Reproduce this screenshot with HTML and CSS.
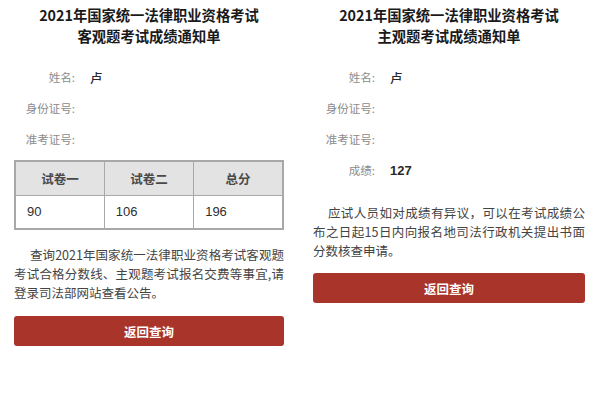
FILE: index.html
```html
<!DOCTYPE html>
<html lang="zh-CN">
<head>
<meta charset="utf-8">
<link rel="stylesheet" href="styles.css">
</head>
<body>
<div class="page">
  <section class="panel panel-left">
    <h1 class="title">2021年国家统一法律职业资格考试<br>客观题考试成绩通知单</h1>
    <div class="fields">
      <div class="row"><span class="label">姓名:</span><span class="value">卢</span></div>
      <div class="row"><span class="label">身份证号:</span><span class="value"></span></div>
      <div class="row"><span class="label">准考证号:</span><span class="value"></span></div>
    </div>
    <table class="scores">
      <thead>
        <tr><th>试卷一</th><th>试卷二</th><th>总分</th></tr>
      </thead>
      <tbody>
        <tr><td>90</td><td>106</td><td>196</td></tr>
      </tbody>
    </table>
    <p class="note">
      <span class="line first">查询2021年国家统一法律职业资格考试客观题</span>
      <span class="line">考试合格分数线、主观题考试报名交费等事宜,请</span>
      <span class="line last">登录司法部网站查看公告。</span>
    </p>
    <button class="btn">返回查询</button>
  </section>
  <section class="panel panel-right">
    <h1 class="title">2021年国家统一法律职业资格考试<br>主观题考试成绩通知单</h1>
    <div class="fields">
      <div class="row"><span class="label">姓名:</span><span class="value">卢</span></div>
      <div class="row"><span class="label">身份证号:</span><span class="value"></span></div>
      <div class="row"><span class="label">准考证号:</span><span class="value"></span></div>
      <div class="row"><span class="label">成绩:</span><span class="value score">127</span></div>
    </div>
    <p class="note note-right">
      <span class="line first">应试人员如对成绩有异议，可以在考试成绩公</span>
      <span class="line">布之日起15日内向报名地司法行政机关提出书面</span>
      <span class="line last">分数核查申请。</span>
    </p>
    <button class="btn">返回查询</button>
  </section>
</div>
</body>
</html>
```

FILE: styles.css
```css
* { box-sizing: border-box; }
html, body {
  margin: 0;
  padding: 0;
  background: #ffffff;
}
body {
  width: 600px;
  height: 400px;
  overflow: hidden;
  font-family: "Noto Sans CJK SC", "Noto Sans", sans-serif;
  color: #333;
}
.page {
  display: flex;
  width: 600px;
}
.panel {
  width: 300px;
  display: flex;
  flex-direction: column;
  padding-top: 4px;
}
.panel-left { padding-left: 14px; padding-right: 16px; }
.panel-right { padding-left: 13px; padding-right: 15px; }

.title {
  margin: 0;
  font-size: 14.3px;
  line-height: 21px;
  font-weight: 700;
  text-align: center;
  color: #1a1a1a;
}
.fields {
  margin-top: 15.5px;
  display: flex;
  flex-direction: column;
}
.row {
  display: flex;
  height: 31px;
  align-items: center;
}
.label {
  width: 61px;
  text-align: right;
  font-size: 11.5px;
  color: #8c8c8c;
}
.panel-right .label { width: 62px; }
.value {
  margin-left: 15px;
  font-size: 12.5px;
  font-weight: 500;
  color: #2a2a2a;
}
.value.score {
  font-weight: 700;
  font-family: "Liberation Sans", "Noto Sans CJK SC", sans-serif;
  font-size: 13px;
  color: #2a2a2a;
}

.scores {
  margin-top: 5.5px;
  width: 270px;
  border-collapse: collapse;
  table-layout: fixed;
  border: 2px solid #a8a8a8;
}
.scores th, .scores td {
  border: 1.5px solid #a8a8a8;
  height: 34px;
  padding: 0;
}
.scores th {
  background: #e3e3e3;
  font-size: 12.5px;
  font-weight: 700;
  color: #4a4a4a;
  text-align: center;
}
.scores td {
  font-family: "Liberation Sans", "Noto Sans CJK SC", sans-serif;
  font-size: 13px;
  color: #2e2e2e;
  text-align: left;
  padding-left: 11px;
}

.note {
  margin: 14.5px 0 0 0;
  font-size: 12.5px;
  line-height: 19px;
  color: #444;
}
.note-right { margin-top: 17px; }
.line {
  display: block;
  white-space: nowrap;
  text-align: justify;
  text-align-last: justify;
}
.line.first { padding-left: 16px; }
.panel-right .line.first { padding-left: 15px; }
.line.last { text-align-last: left; }

.btn {
  margin-top: 14.5px;
  height: 30px;
  width: 100%;
  border: none;
  border-radius: 3px;
  background: #a9342a;
  color: #fff;
  font-family: "Noto Sans CJK SC", sans-serif;
  font-size: 12.5px;
  font-weight: 700;
  padding: 0;
}
.panel-right .btn { margin-top: 13.5px; }
```
